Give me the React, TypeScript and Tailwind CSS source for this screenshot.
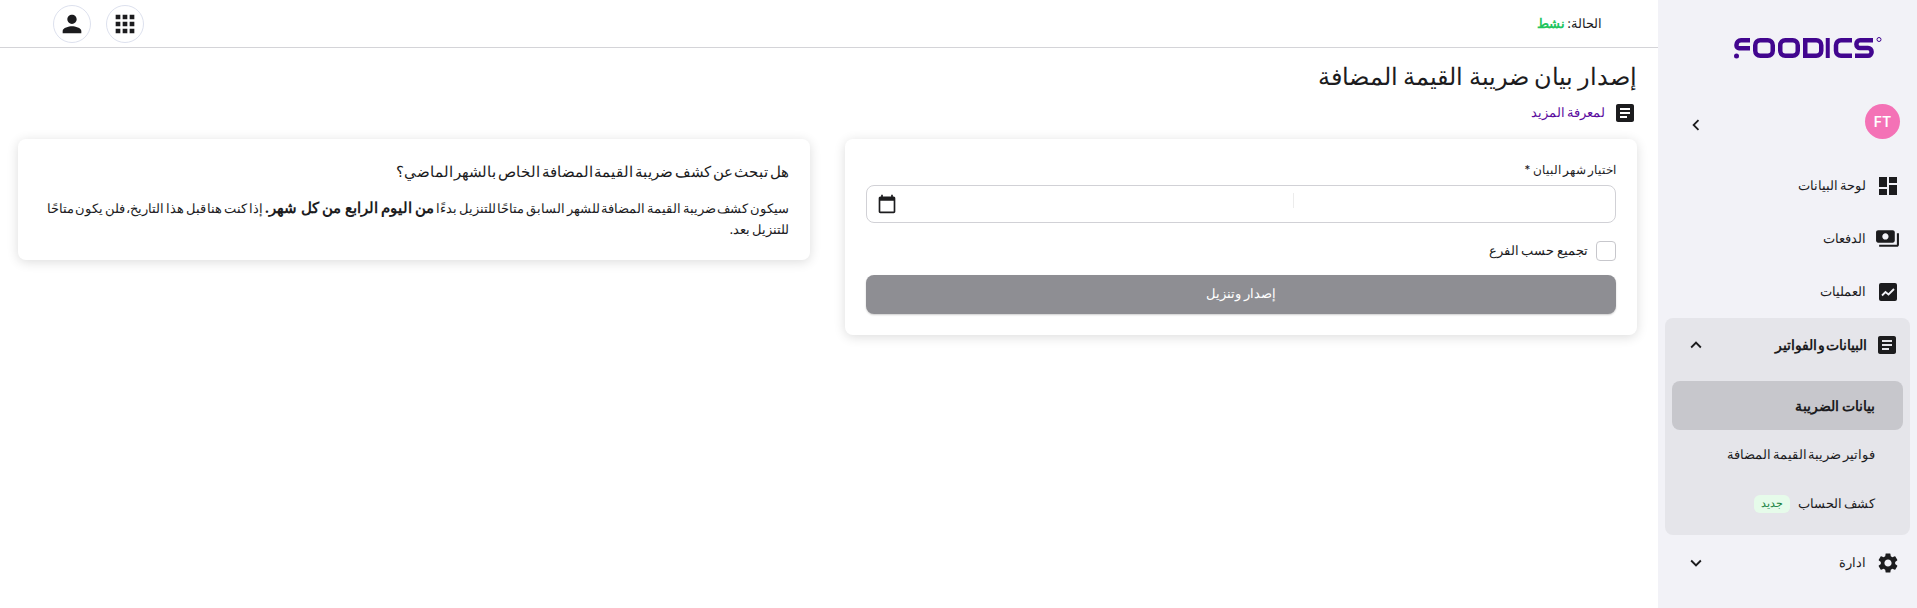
import { MdApps, MdArticle, MdCalendarToday, MdDashboard, MdKeyboardArrowDown, MdKeyboardArrowLeft, MdKeyboardArrowUp, MdPayments, MdPerson, MdSettings } from "react-icons/md";

function Logo() {
  return (
    <svg width="148" height="24" viewBox="0 0 148 24" fill="none" stroke="#42068f" strokeWidth="4.5" className="shrink-0" aria-label="Foodics">
      <path d="M16 4.250H7a4.500 4.500 0 0 0 -4.500 4.500v1a2.500 2.500 0 0 0 2.500 2.500H16" />
      <circle cx="2.500" cy="20" r="2.500" fill="#42068f" stroke="none" />
      <rect x="21.250" y="4.250" width="17.500" height="15.500" rx="5" />
      <rect x="46.250" y="4.250" width="17.500" height="15.500" rx="5" />
      <path d="M71.250 4.250h11a5 5 0 0 1 5 5v5.500a5 5 0 0 1 -5 5h-11z" />
      <path d="M93.750 2v20" strokeWidth="4" />
      <path d="M118 4.250h-11a5 5 0 0 0 -5 5v5.500a5 5 0 0 0 5 5h11" />
      <path d="M139 4.250h-13a3.500 3.750 0 0 0 0 7.750h8a3.500 3.750 0 0 1 0 7.750h-13" />
      <circle cx="145" cy="3.500" r="2" strokeWidth="1" />
    </svg>
  );
}

function ChartIcon() {
  return (
    <svg width="18" height="18" viewBox="0 0 18 18" className="shrink-0">
      <rect width="18" height="18" rx="2" fill="#1c1c1e" />
      <path d="M3 12.500l3.500-3.500 3 2.500 5.500-5.500" fill="none" stroke="#f2f2f7" strokeWidth="1.800" />
    </svg>
  );
}

function NavItem({ icon, label, chevron, h = "h-[53px]" }: { icon: React.ReactNode; label: string; chevron?: React.ReactNode; h?: string }) {
  return (
    <div className={`flex ${h} items-center pr-[20px] pl-[27px] text-[13px] text-[#1c1c1e] [word-spacing:-2px]`}>
      <span className="flex w-[19px] shrink-0 justify-center">{icon}</span>
      <span className="mr-[12px] flex-1">{label}</span>
      {chevron}
    </div>
  );
}

function Sidebar() {
  return (
    <aside className="flex h-full w-[259px] shrink-0 flex-col bg-[#f2f2f7]">
      <div className="flex h-[104px] justify-end pt-[36px] pl-[76px]">
        <Logo />
      </div>
      <div className="flex h-[55px] items-start pr-[17px] pl-[27px]">
        <div className="flex h-[35px] w-[35px] items-center justify-center rounded-full bg-[#f472b6] text-[14px] font-semibold text-white">FT</div>
        <MdKeyboardArrowLeft size={22} className="mt-[10px] mr-auto text-[#1c1c1e]" />
      </div>
      <NavItem icon={<MdDashboard size={24} className="shrink-0" />} label="لوحة البيانات" />
      <NavItem icon={<MdPayments size={25} className="shrink-0" />} label="الدفعات" />
      <NavItem icon={<ChartIcon />} label="العمليات" />
      <div className="mx-[7px] flex h-[217px] flex-col rounded-lg bg-[#e5e5ea]">
        <div className="flex h-[54px] items-center pr-[11px] pl-[20px] text-[13.5px] font-bold text-[#1c1c1e] [word-spacing:-2px]">
          <MdArticle size={24} className="shrink-0" />
          <span className="mr-[8px] flex-1">البيانات و الفواتير</span>
          <MdKeyboardArrowUp size={22} />
        </div>
        <div className="mx-[7px] mt-[9px] flex h-[49px] items-center rounded-lg bg-[#c7c7cc] pr-[28px] text-[14px] font-bold text-[#1c1c1e]">بيانات الضريبة</div>
        <div className="mx-[7px] flex h-[49px] items-center pr-[28px] text-[13px] text-[#1c1c1e] [word-spacing:-2px]">فواتير ضريبة القيمة المضافة</div>
        <div className="mx-[7px] flex h-[49px] items-center gap-[8px] pr-[28px] text-[13px] text-[#1c1c1e] [word-spacing:-2px]">
          كشف الحساب
          <span className="flex h-[18px] w-[36px] items-center justify-center rounded-md bg-[#e6fbea] text-[10.5px] text-[#15803d]">جديد</span>
        </div>
      </div>
      <NavItem h="h-[56px]" icon={<MdSettings size={24} className="shrink-0" />} label="ادارة" chevron={<MdKeyboardArrowDown size={22} />} />
    </aside>
  );
}

function TopBar() {
  return (
    <header className="flex h-[48px] shrink-0 items-center justify-between border-b border-[#d4d4d8] pr-[56px] pl-[53px]">
      <p className="text-[13px] text-[#1c1c1e] [word-spacing:-1px]">
        الحالة: <span className="font-bold text-[#22c55e]">نشط</span>
      </p>
      <div className="flex gap-[15px]">
        <button className="flex h-[38px] w-[38px] items-center justify-center rounded-full border border-[#dde1ee] text-[#1c1c1e]">
          <MdApps size={28} />
        </button>
        <button className="flex h-[38px] w-[38px] items-center justify-center rounded-full border border-[#dde1ee] text-[#1c1c1e]">
          <MdPerson size={28} />
        </button>
      </div>
    </header>
  );
}

export default function App() {
  return (
    <div dir="rtl" className="flex h-[608px] w-[1917px] overflow-hidden bg-white font-['Inter','Noto_Sans',sans-serif]">
      <Sidebar />
      <main className="flex min-w-0 flex-1 flex-col">
        <TopBar />
        <div className="pr-[21px] pl-[18px]">
          <h1 className="mt-[13px] text-[24px] leading-[32px] text-[#1c1c1e] [word-spacing:-1.5px]">إصدار بيان ضريبة القيمة المضافة</h1>
          <div className="mt-[8px] flex items-center gap-[8px] text-[13px] text-[#5b0c9e] [word-spacing:-2px]">
            <MdArticle size={24} className="shrink-0 text-[#1c1c1e]" />
            لمعرفة المزيد
          </div>
          <div className="mt-[14px] grid grid-cols-2 items-start gap-[35px]">
            <section className="flex h-[196px] flex-col rounded-lg bg-white px-[21px] pt-[19px] shadow-[0_2px_12px_rgba(0,0,0,0.14)]">
              <label className="text-[11.5px] leading-[24px] text-[#1c1c1e] [word-spacing:-1px]">اختيار شهر البيان *</label>
              <div className="relative mt-[3px] flex h-[38px] shrink-0 items-center justify-end rounded-lg border border-[#d1d1d6] pl-[10px]">
                <span className="absolute top-[7px] left-[426px] h-[15px] w-[1px] bg-[#ececec]"></span>
                <MdCalendarToday size={20} className="text-[#1c1c1e]" />
              </div>
              <label className="mt-[18px] flex items-center gap-[8px] text-[13px] text-[#1c1c1e] [word-spacing:-1px]">
                <span className="h-[20px] w-[20px] rounded-[4px] border border-[#c7c7cc]"></span>
                تجميع حسب الفرع
              </label>
              <button className="mt-[14px] h-[39px] shrink-0 rounded-lg bg-[#8e8e93] text-[12.5px] text-white shadow-[0_1px_2px_rgba(0,0,0,0.2)] [word-spacing:-1.5px]">إصدار وتنزيل</button>
            </section>
            <section className="h-[121px] rounded-lg bg-white px-[21px] pt-[21px] shadow-[0_2px_12px_rgba(0,0,0,0.14)]">
              <h2 className="text-[15px] leading-[24px] text-[#1c1c1e] [word-spacing:-2.5px]">هل تبحث عن كشف ضريبة القيمة المضافة الخاص بالشهر الماضي؟</h2>
              <p className="mt-[13px] text-[13px] leading-[21px] text-[#1c1c1e] [word-spacing:-2px]">
                سيكون كشف ضريبة القيمة المضافة للشهر السابق متاحًا للتنزيل بدءًا <b className="text-[14.5px] [word-spacing:0px]">من اليوم الرابع من كل شهر.</b> إذا كنت هنا قبل هذا التاريخ، فلن يكون متاحًا للتنزيل بعد.
              </p>
            </section>
          </div>
        </div>
      </main>
    </div>
  );
}
